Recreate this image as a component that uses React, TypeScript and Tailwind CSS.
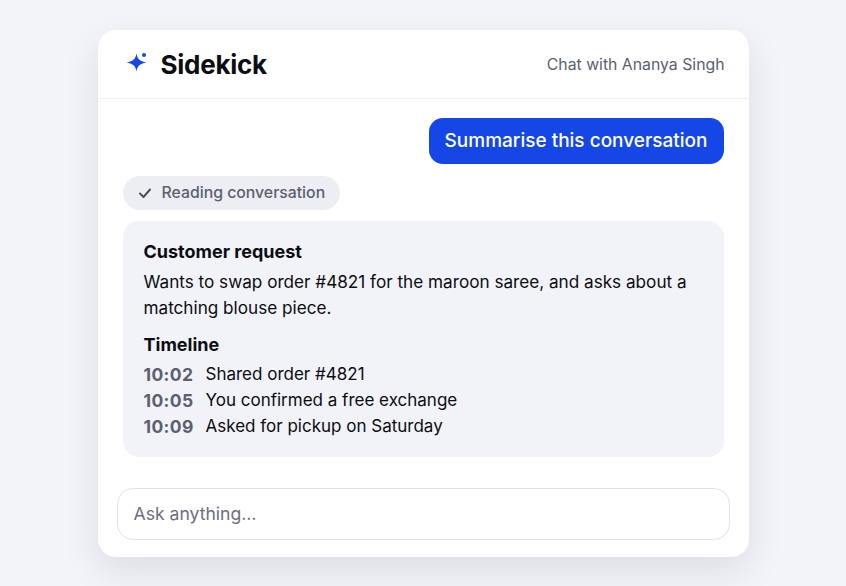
import React from "react";

const timeline = [
	{ time: "10:02", text: "Shared order #4821" },
	{ time: "10:05", text: "You confirmed a free exchange" },
	{ time: "10:09", text: "Asked for pickup on Saturday" },
];

export default function App() {
	return (
		<div className="w-[846px] h-[586px] overflow-hidden bg-[#f3f4f8] flex justify-center pt-[30px] font-['Inter',sans-serif] text-[#0b0d12]">
			<div className="w-[651px] h-[527px] bg-white rounded-[18px] shadow-[0_14px_36px_rgba(20,30,60,0.1)] flex flex-col">
				<div className="h-[69px] shrink-0 border-b border-[#eeeff3] flex items-center justify-between pl-[27px] pr-[24px]">
					<div className="flex items-center gap-[14px]">
						<svg width="22" height="22" viewBox="0 0 22 22" fill="#1447e6">
							<path d="M11.5 0.5 C12.5 6 14.5 8.2 21.5 9.5 C14.5 10.8 12.5 13 11.5 18.5 C10.5 13 8.5 10.8 1.5 9.5 C8.5 8.2 10.5 6 11.5 0.5 Z" />
							<circle cx="19" cy="2" r="2" />
						</svg>
						<span className="text-[26px] font-bold tracking-[-0.25px]">Sidekick</span>
					</div>
					<span className="pt-[1px] text-[15.8px] text-[#5b6070]">Chat with Ananya Singh</span>
				</div>
				<div className="flex-1 flex flex-col pt-[19px] px-[25px]">
					<div className="flex justify-end">
						<div className="h-[46px] pt-[1px] px-[16px] flex items-center rounded-[14px] bg-[#1447e6] text-white text-[19px] font-medium">
							Summarise this conversation
						</div>
					</div>
					<div className="mt-[12px] self-start h-[34px] pl-[14px] pr-[15px] rounded-full bg-[#eceef3] flex items-center gap-[9px] text-[#5b6070] text-[15.8px] font-medium">
						<svg width="16" height="16" viewBox="0 0 16 16" fill="none" stroke="#4b5060" strokeWidth="2" strokeLinecap="round" strokeLinejoin="round">
							<path d="M3 8.5 L6.5 12 L13 4.5" />
						</svg>
						Reading conversation
					</div>
					<div className="mt-[11px] h-[236px] rounded-[16px] bg-[#f2f3f8] pt-[18px] px-[21px]">
						<h3 className="text-[18px] font-bold leading-[26px]">Customer request</h3>
						<p className="mt-[4px] text-[17.15px] leading-[26px]">
							Wants to swap order #4821 for the maroon saree, and asks about a matching blouse piece.
						</p>
						<h3 className="mt-[11px] text-[18px] font-bold leading-[26px]">Timeline</h3>
						<div className="mt-[4px] flex flex-col">
							{timeline.map((row) => (
								<div key={row.time} className="flex items-center gap-[11px] h-[26px] text-[17px]">
									<span className="font-bold text-[#5b6070] text-[17.5px] tracking-[0.35px] w-[51px]">{row.time}</span>
									<span>{row.text}</span>
								</div>
							))}
						</div>
					</div>
					<div className="mt-[31px] -mx-[6px] h-[52px] pt-[1px] rounded-[16px] border-[1.5px] border-[#e2e3ea] bg-white flex items-center px-[16px] text-[17.6px] text-[#6b7080]">
						Ask anything…
					</div>
				</div>
			</div>
		</div>
	);
}
